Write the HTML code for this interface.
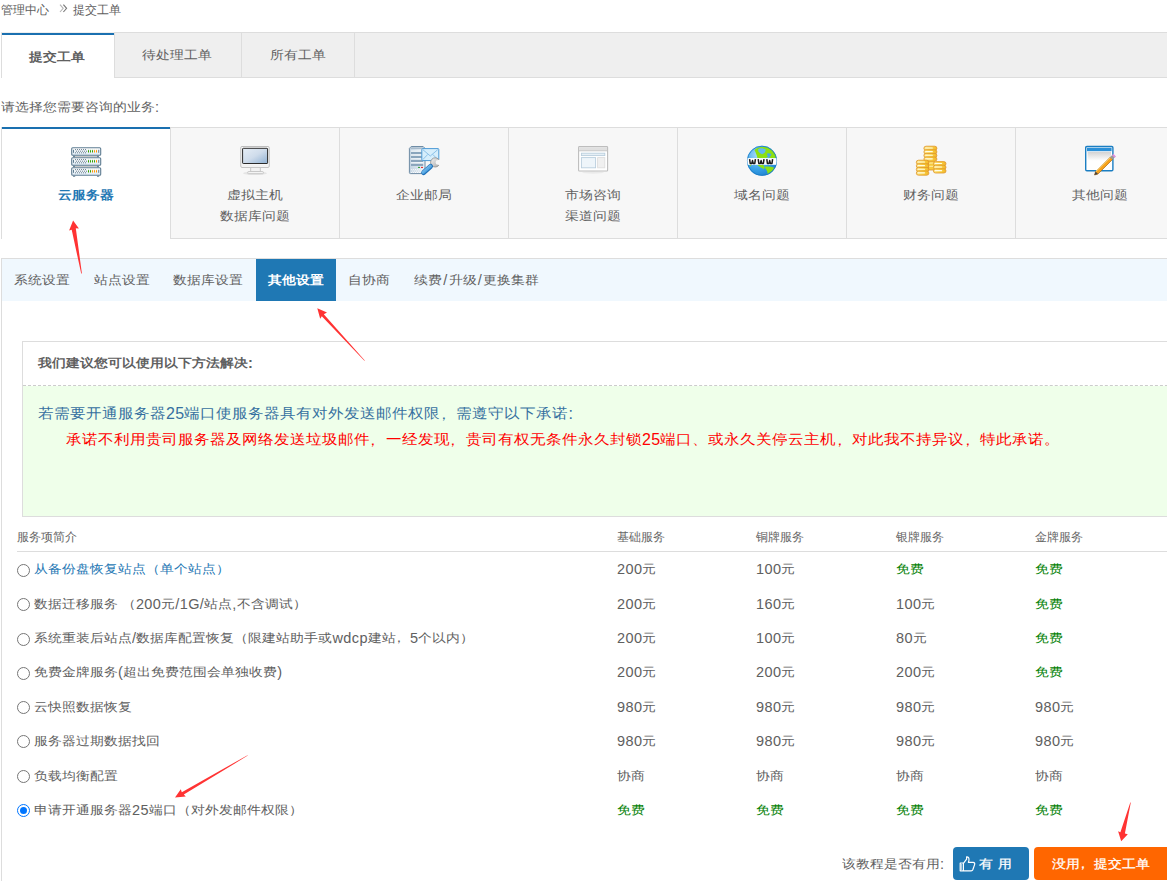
<!DOCTYPE html><html><head><meta charset="utf-8"><style>
*{box-sizing:border-box}
html,body{margin:0;padding:0}
body{width:1167px;height:881px;overflow:hidden;position:relative;background:#fff;font-family:"Liberation Sans",sans-serif;color:#555}
.a{position:absolute;white-space:nowrap}
.f12{font-size:12px;line-height:12px}
.f14{font-size:14px;line-height:14px;transform:scaleY(.87)}
.f16{font-size:16px;line-height:16px;transform:scaleY(.9)}
.b{font-weight:bold}
.f14 .l{letter-spacing:0.4px;font-size:14.5px;display:inline-block;transform:scaleY(1.15)}
.f16 .l{letter-spacing:0.3px;font-size:16px;display:inline-block;transform:scaleY(1.11)}
.f12 .l{letter-spacing:0.4px}
.sl .l{letter-spacing:0.4px;padding:0 1px 0 1.2px}
.cm{display:inline-block;width:1em;text-indent:-0.3em;overflow:hidden;vertical-align:top}
.pl{display:inline-block;width:1em;text-indent:0.3em;overflow:hidden;vertical-align:top}
</style></head><body>

<div class="a f12" style="left:1px;top:4px;color:#606060;">管理中心</div>
<svg class="a" style="left:59px;top:4px" width="9" height="9" viewBox="0 0 9 9"><path d="M1 0.6 L4.2 4.3 L1 8" fill="none" stroke="#b5b5b5" stroke-width="1.1"/><path d="M4.4 0.6 L7.6 4.3 L4.4 8" fill="none" stroke="#777" stroke-width="1.1"/></svg>
<div class="a f12" style="left:73px;top:4px;color:#606060;">提交工单</div>
<div class="a" style="left:1px;top:32px;width:1180px;height:46px;background:#efefef;border-top:1px solid #ddd;border-bottom:1px solid #ddd"></div>
<div class="a" style="left:1px;top:32px;width:113px;height:46px;background:#fff;border-left:1px solid #ddd;border-top:1px solid #eee"></div>
<div class="a" style="left:2px;top:33px;width:112px;height:2px;background:#1a70b0;"></div>
<div class="a" style="left:114px;top:33px;width:1px;height:45px;background:#ddd;"></div>
<div class="a" style="left:241px;top:33px;width:1px;height:44px;background:#ddd;"></div>
<div class="a" style="left:354px;top:33px;width:1px;height:44px;background:#ddd;"></div>
<div class="a f14 b" style="left:29px;top:50px;color:#606060;">提交工单</div>
<div class="a f14" style="left:142px;top:48px;color:#606060;">待处理工单</div>
<div class="a f14" style="left:270px;top:48px;color:#606060;">所有工单</div>
<div class="a f14" style="left:1px;top:100px;color:#606060;">请选择您需要咨询的业务<span class="l">:</span></div>
<div class="a" style="left:1px;top:127px;width:169px;height:112px;background:#fff;border-left:1px solid #ddd;border-top:1px solid #ddd"></div>
<svg class="a" style="left:70px;top:145px" width="32" height="32" viewBox="0 0 32 32"><defs><linearGradient id="sg" x1="0" y1="0" x2="0" y2="1"><stop offset="0" stop-color="#ffffff"/><stop offset="1" stop-color="#dce9f3"/></linearGradient></defs><rect x="3" y="10.60" width="26" height="1.6" fill="#c9c9c9"/><rect x="3" y="10.60" width="2" height="1.6" fill="#6f8799"/><rect x="27" y="10.60" width="2" height="1.6" fill="#6f8799"/><rect x="1.7" y="2.70" width="29" height="7.6" rx="1" fill="url(#sg)" stroke="#5f7d92" stroke-width="1.1"/><rect x="3" y="4.80" width="1" height="3" fill="#5f7d92"/><rect x="28.2" y="4.80" width="1" height="3" fill="#5f7d92"/><rect x="5" y="4.10" width="1" height="1" fill="#6b7f8e"/><rect x="7" y="4.10" width="1" height="1" fill="#6b7f8e"/><rect x="9" y="4.10" width="1" height="1" fill="#6b7f8e"/><rect x="11" y="4.10" width="1" height="1" fill="#6b7f8e"/><rect x="13" y="4.10" width="1" height="1" fill="#6b7f8e"/><rect x="15" y="4.10" width="1" height="1" fill="#6b7f8e"/><rect x="6" y="5.70" width="1" height="1" fill="#6b7f8e"/><rect x="8" y="5.70" width="1" height="1" fill="#6b7f8e"/><rect x="10" y="5.70" width="1" height="1" fill="#6b7f8e"/><rect x="12" y="5.70" width="1" height="1" fill="#6b7f8e"/><rect x="14" y="5.70" width="1" height="1" fill="#6b7f8e"/><rect x="16" y="5.70" width="1" height="1" fill="#6b7f8e"/><rect x="5" y="7.30" width="1" height="1" fill="#6b7f8e"/><rect x="7" y="7.30" width="1" height="1" fill="#6b7f8e"/><rect x="9" y="7.30" width="1" height="1" fill="#6b7f8e"/><rect x="11" y="7.30" width="1" height="1" fill="#6b7f8e"/><rect x="13" y="7.30" width="1" height="1" fill="#6b7f8e"/><rect x="15" y="7.30" width="1" height="1" fill="#6b7f8e"/><rect x="18" y="4.80" width="1" height="2.8" rx="0.4" fill="#3aa000"/><rect x="20" y="4.80" width="1" height="2.8" rx="0.4" fill="#3aa000"/><rect x="22" y="4.80" width="1" height="2.8" rx="0.4" fill="#3aa000"/><rect x="24" y="4.80" width="1" height="2.8" rx="0.4" fill="#ff9900"/><rect x="26" y="4.80" width="1" height="2.8" rx="0.4" fill="#ff9900"/><rect x="3" y="20.60" width="26" height="1.6" fill="#c9c9c9"/><rect x="3" y="20.60" width="2" height="1.6" fill="#6f8799"/><rect x="27" y="20.60" width="2" height="1.6" fill="#6f8799"/><rect x="1.7" y="12.70" width="29" height="7.6" rx="1" fill="url(#sg)" stroke="#5f7d92" stroke-width="1.1"/><rect x="3" y="14.80" width="1" height="3" fill="#5f7d92"/><rect x="28.2" y="14.80" width="1" height="3" fill="#5f7d92"/><rect x="5" y="14.10" width="1" height="1" fill="#6b7f8e"/><rect x="7" y="14.10" width="1" height="1" fill="#6b7f8e"/><rect x="9" y="14.10" width="1" height="1" fill="#6b7f8e"/><rect x="11" y="14.10" width="1" height="1" fill="#6b7f8e"/><rect x="13" y="14.10" width="1" height="1" fill="#6b7f8e"/><rect x="15" y="14.10" width="1" height="1" fill="#6b7f8e"/><rect x="6" y="15.70" width="1" height="1" fill="#6b7f8e"/><rect x="8" y="15.70" width="1" height="1" fill="#6b7f8e"/><rect x="10" y="15.70" width="1" height="1" fill="#6b7f8e"/><rect x="12" y="15.70" width="1" height="1" fill="#6b7f8e"/><rect x="14" y="15.70" width="1" height="1" fill="#6b7f8e"/><rect x="16" y="15.70" width="1" height="1" fill="#6b7f8e"/><rect x="5" y="17.30" width="1" height="1" fill="#6b7f8e"/><rect x="7" y="17.30" width="1" height="1" fill="#6b7f8e"/><rect x="9" y="17.30" width="1" height="1" fill="#6b7f8e"/><rect x="11" y="17.30" width="1" height="1" fill="#6b7f8e"/><rect x="13" y="17.30" width="1" height="1" fill="#6b7f8e"/><rect x="15" y="17.30" width="1" height="1" fill="#6b7f8e"/><rect x="18" y="14.80" width="1" height="2.8" rx="0.4" fill="#3aa000"/><rect x="20" y="14.80" width="1" height="2.8" rx="0.4" fill="#3aa000"/><rect x="22" y="14.80" width="1" height="2.8" rx="0.4" fill="#3aa000"/><rect x="24" y="14.80" width="1" height="2.8" rx="0.4" fill="#3aa000"/><rect x="26" y="14.80" width="1" height="2.8" rx="0.4" fill="#ff9900"/><rect x="1.7" y="22.70" width="29" height="7.6" rx="1" fill="url(#sg)" stroke="#5f7d92" stroke-width="1.1"/><rect x="3" y="24.80" width="1" height="3" fill="#5f7d92"/><rect x="28.2" y="24.80" width="1" height="3" fill="#5f7d92"/><rect x="5" y="24.10" width="1" height="1" fill="#6b7f8e"/><rect x="7" y="24.10" width="1" height="1" fill="#6b7f8e"/><rect x="9" y="24.10" width="1" height="1" fill="#6b7f8e"/><rect x="11" y="24.10" width="1" height="1" fill="#6b7f8e"/><rect x="13" y="24.10" width="1" height="1" fill="#6b7f8e"/><rect x="15" y="24.10" width="1" height="1" fill="#6b7f8e"/><rect x="6" y="25.70" width="1" height="1" fill="#6b7f8e"/><rect x="8" y="25.70" width="1" height="1" fill="#6b7f8e"/><rect x="10" y="25.70" width="1" height="1" fill="#6b7f8e"/><rect x="12" y="25.70" width="1" height="1" fill="#6b7f8e"/><rect x="14" y="25.70" width="1" height="1" fill="#6b7f8e"/><rect x="16" y="25.70" width="1" height="1" fill="#6b7f8e"/><rect x="5" y="27.30" width="1" height="1" fill="#6b7f8e"/><rect x="7" y="27.30" width="1" height="1" fill="#6b7f8e"/><rect x="9" y="27.30" width="1" height="1" fill="#6b7f8e"/><rect x="11" y="27.30" width="1" height="1" fill="#6b7f8e"/><rect x="13" y="27.30" width="1" height="1" fill="#6b7f8e"/><rect x="15" y="27.30" width="1" height="1" fill="#6b7f8e"/><rect x="18" y="24.80" width="1" height="2.8" rx="0.4" fill="#3aa000"/><rect x="20" y="24.80" width="1" height="2.8" rx="0.4" fill="#3aa000"/><rect x="22" y="24.80" width="1" height="2.8" rx="0.4" fill="#ff9900"/><rect x="24" y="24.80" width="1" height="2.8" rx="0.4" fill="#ff9900"/><rect x="26" y="24.80" width="1" height="2.8" rx="0.4" fill="#ff9900"/><rect x="3" y="30.6" width="2.2" height="1.2" fill="#6f8799"/><rect x="27" y="30.6" width="2.2" height="1.2" fill="#6f8799"/></svg>
<div class="a f14 b" style="left:1px;top:188px;color:#1f78b4;width:169px;text-align:center">云服务器</div>
<div class="a" style="left:170px;top:127px;width:169px;height:112px;background:#f7f7f7;border-left:1px solid #ddd;border-top:1px solid #ddd;border-bottom:1px solid #ddd"></div>
<svg class="a" style="left:239px;top:145px" width="32" height="32" viewBox="0 0 32 32"><defs><linearGradient id="mg" x1="0" y1="0" x2="1" y2="1"><stop offset="0" stop-color="#e6eef6"/><stop offset="0.5" stop-color="#cfdceb"/><stop offset="1" stop-color="#8fb0d2"/></linearGradient></defs><ellipse cx="16" cy="28.3" rx="12" ry="1.8" fill="#000" opacity="0.07"/><rect x="1.8" y="1.5" width="28.4" height="20.9" rx="1.2" fill="#fbfbfb" stroke="#bdbdbd" stroke-width="1"/><rect x="3.6" y="3.3" width="25" height="15.2" rx="0.6" fill="url(#mg)" stroke="#2b2b2b" stroke-width="1"/><line x1="3" y1="20.2" x2="29" y2="20.2" stroke="#e4e4e4" stroke-width="0.6"/><rect x="11.7" y="22.4" width="9.6" height="4.2" fill="#f2f2f2" stroke="#c2c2c2" stroke-width="0.9"/><rect x="8.8" y="26.6" width="15.5" height="2.1" rx="0.5" fill="#fafafa" stroke="#c2c2c2" stroke-width="0.9"/></svg>
<div class="a f14" style="left:170px;top:188px;color:#606060;width:169px;text-align:center">虚拟主机</div>
<div class="a f14" style="left:170px;top:209px;color:#606060;width:169px;text-align:center">数据库问题</div>
<div class="a" style="left:339px;top:127px;width:169px;height:112px;background:#f7f7f7;border-left:1px solid #ddd;border-top:1px solid #ddd;border-bottom:1px solid #ddd"></div>
<svg class="a" style="left:408px;top:145px" width="32" height="32" viewBox="0 0 32 32"><defs><linearGradient id="tg" x1="0" y1="0" x2="1" y2="0"><stop offset="0" stop-color="#c3d4e2"/><stop offset="1" stop-color="#e9f0f6"/></linearGradient><linearGradient id="hg" x1="0" y1="0" x2="1" y2="1"><stop offset="0" stop-color="#9ad6fa"/><stop offset="1" stop-color="#2584d0"/></linearGradient><linearGradient id="wg" x1="0" y1="0" x2="1" y2="1"><stop offset="0" stop-color="#f4f4f4"/><stop offset="1" stop-color="#a8a8a8"/></linearGradient></defs><path d="M3.2 1.5 H15.2 L17 3.4 V27.6 Q17 28.6 16 28.6 H2.4 Q1.4 28.6 1.4 27.6 V3.4 Z" fill="url(#tg)" stroke="#6f8ca5" stroke-width="1"/><rect x="2.6" y="2.4" width="13.4" height="1.6" fill="#a9bccc"/><rect x="3" y="5.60" width="12.2" height="1.1" fill="#ffffff"/><rect x="3" y="6.90" width="12.2" height="2.2" fill="#8aa5bc"/><rect x="3" y="9.55" width="12.2" height="1.1" fill="#ffffff"/><rect x="3" y="10.85" width="12.2" height="2.2" fill="#8aa5bc"/><rect x="3" y="13.50" width="12.2" height="1.1" fill="#ffffff"/><rect x="3" y="14.80" width="12.2" height="2.2" fill="#8aa5bc"/><rect x="3" y="17.45" width="12.2" height="1.1" fill="#ffffff"/><rect x="3" y="18.75" width="12.2" height="2.2" fill="#8aa5bc"/><rect x="10" y="21.9" width="2" height="1" fill="#2a9a2a"/><rect x="13" y="21.9" width="2" height="1" fill="#e02020"/><rect x="3.20" y="24.20" width="1" height="0.9" fill="#fff"/><rect x="5.10" y="24.20" width="1" height="0.9" fill="#fff"/><rect x="7.00" y="24.20" width="1" height="0.9" fill="#fff"/><rect x="8.90" y="24.20" width="1" height="0.9" fill="#fff"/><rect x="10.80" y="24.20" width="1" height="0.9" fill="#fff"/><rect x="12.70" y="24.20" width="1" height="0.9" fill="#fff"/><rect x="4.20" y="25.60" width="1" height="0.9" fill="#fff"/><rect x="6.10" y="25.60" width="1" height="0.9" fill="#fff"/><rect x="8.00" y="25.60" width="1" height="0.9" fill="#fff"/><rect x="9.90" y="25.60" width="1" height="0.9" fill="#fff"/><rect x="11.80" y="25.60" width="1" height="0.9" fill="#fff"/><rect x="13.70" y="25.60" width="1" height="0.9" fill="#fff"/><rect x="3.20" y="27.00" width="1" height="0.9" fill="#fff"/><rect x="5.10" y="27.00" width="1" height="0.9" fill="#fff"/><rect x="7.00" y="27.00" width="1" height="0.9" fill="#fff"/><rect x="8.90" y="27.00" width="1" height="0.9" fill="#fff"/><rect x="10.80" y="27.00" width="1" height="0.9" fill="#fff"/><rect x="12.70" y="27.00" width="1" height="0.9" fill="#fff"/><rect x="13.8" y="3.6" width="17" height="12" rx="0.8" fill="#d6eefc" stroke="#4d9ad6" stroke-width="1"/><path d="M14.8 4.6 L22.3 11 L29.8 4.6 M14.8 14.6 L19.8 9.4 M29.8 14.6 L24.8 9.4" fill="none" stroke="#6caee0" stroke-width="0.7"/><circle cx="27.2" cy="17.4" r="4.6" fill="url(#wg)" stroke="#8c8c8c" stroke-width="0.8"/><path d="M28.2 15.6 L32 14.6 L32 20.2 L28.2 19.2 Q27 17.4 28.2 15.6 Z" fill="#f7f7f7"/><path d="M15.6 27.6 L22.6 21.4" stroke="#1f70b8" stroke-width="4.8" stroke-linecap="round"/><path d="M15.4 27.4 L22.4 21.2" stroke="url(#hg)" stroke-width="3.2" stroke-linecap="round"/></svg>
<div class="a f14" style="left:339px;top:188px;color:#606060;width:169px;text-align:center">企业邮局</div>
<div class="a" style="left:508px;top:127px;width:169px;height:112px;background:#f7f7f7;border-left:1px solid #ddd;border-top:1px solid #ddd;border-bottom:1px solid #ddd"></div>
<svg class="a" style="left:577px;top:145px" width="32" height="32" viewBox="0 0 32 32"><ellipse cx="16" cy="27.5" rx="11" ry="1.2" fill="#000" opacity="0.05"/><rect x="1.6" y="1.6" width="29" height="24.4" rx="0.8" fill="#fff" stroke="#bdbdbd" stroke-width="1.1"/><rect x="2.2" y="2.2" width="27.8" height="3.6" fill="#e0e0e0"/><line x1="1.6" y1="5.8" x2="30.6" y2="5.8" stroke="#c4c4c4" stroke-width="0.9"/><rect x="4.4" y="8.2" width="23.4" height="2.4" fill="#e6eff6" stroke="#b9cedd" stroke-width="0.9"/><rect x="4.4" y="12.6" width="14.2" height="10.2" fill="#eef5fa" stroke="#b9cedd" stroke-width="0.9"/><rect x="20.6" y="12.6" width="7.2" height="10.2" fill="#f0f0f0" stroke="#dedede" stroke-width="0.9"/></svg>
<div class="a f14" style="left:508px;top:188px;color:#606060;width:169px;text-align:center">市场咨询</div>
<div class="a f14" style="left:508px;top:209px;color:#606060;width:169px;text-align:center">渠道问题</div>
<div class="a" style="left:677px;top:127px;width:169px;height:112px;background:#f7f7f7;border-left:1px solid #ddd;border-top:1px solid #ddd;border-bottom:1px solid #ddd"></div>
<svg class="a" style="left:746px;top:145px" width="32" height="32" viewBox="0 0 32 32"><defs><radialGradient id="gg" cx="0.35" cy="0.3" r="0.85"><stop offset="0" stop-color="#a8dcfb"/><stop offset="0.55" stop-color="#3aa2e8"/><stop offset="1" stop-color="#1477c6"/></radialGradient><clipPath id="gc"><circle cx="16" cy="15.8" r="14.6"/></clipPath></defs><circle cx="16" cy="15.8" r="15" fill="url(#gg)"/><g clip-path="url(#gc)" fill="#8ce012"><path d="M8.5 5 C11 2.4 16 1.4 20 2 C24 2.6 28 5.5 30 9 L30.5 13.2 L24 13.2 L22.5 11 L21 12.5 L19 13.2 L11.5 13.2 C11 11 10 8 8.5 5 Z"/><path d="M11 19.8 L17 19.8 C18.5 21 18.8 22.8 18 24.2 C16 23.2 13 21.5 11 19.8 Z"/><path d="M18.5 22 C21 21.2 25 21.6 28.5 22.8 C28.8 25.5 27 28.5 23.5 30 L21.5 29 C22 26.5 20 24.5 18.5 22 Z"/><path d="M3 19.8 L5.5 19.8 L4.5 21.2 Z"/></g><path d="M12 4.2 C14 3 17 3.2 19.5 4.2 C20 6.5 18.5 8.8 16 9.2 C14 8.6 12.2 7 12 4.2 Z" fill="#62b8f0"/><path d="M21.5 8 L25.5 9 L24 12 L21 11 Z" fill="#4aa8ea"/><circle cx="16" cy="15.8" r="14.6" fill="none" stroke="#1a7ac4" stroke-width="0.8"/><rect x="1" y="13.1" width="30" height="6.7" fill="#fff" clip-path="url(#gc)"/><g fill="none" stroke="#1b1b1b" stroke-width="1.5" stroke-linejoin="round"><path d="M3.6 14.2 L4.2 18.4 L5.8 18.4 L6.5 15.6 L7.2 18.4 L8.8 18.4 L9.4 14.2"/><path d="M12.2 14.2 L12.8 18.4 L14.4 18.4 L15.1 15.6 L15.8 18.4 L17.4 18.4 L18 14.2"/><path d="M20.8 14.2 L21.4 18.4 L23 18.4 L23.7 15.6 L24.4 18.4 L26 18.4 L26.6 14.2"/></g></svg>
<div class="a f14" style="left:677px;top:188px;color:#606060;width:169px;text-align:center">域名问题</div>
<div class="a" style="left:846px;top:127px;width:169px;height:112px;background:#f7f7f7;border-left:1px solid #ddd;border-top:1px solid #ddd;border-bottom:1px solid #ddd"></div>
<svg class="a" style="left:915px;top:145px" width="32" height="32" viewBox="0 0 32 32"><defs><linearGradient id="cg" x1="0" y1="0" x2="1" y2="0"><stop offset="0" stop-color="#fde27a"/><stop offset="0.6" stop-color="#f8cf3e"/><stop offset="1" stop-color="#f2b52a"/></linearGradient></defs><rect x="13.4" y="15" width="6" height="10" fill="#f7c93c" stroke="#e0952a" stroke-width="0.8"/><rect x="14" y="17.6" width="4.6" height="0.9" fill="#fff4b8"/><rect x="14" y="20.8" width="4.6" height="0.9" fill="#fff4b8"/><rect x="8.9" y="1.20" width="13" height="4.20" rx="2.2" fill="url(#cg)" stroke="#e0952a" stroke-width="0.8"/><rect x="10.10" y="2.50" width="7.80" height="1.1" rx="0.55" fill="#fffbe6"/><rect x="8.9" y="4.80" width="13" height="4.20" rx="2.2" fill="url(#cg)" stroke="#e0952a" stroke-width="0.8"/><rect x="10.10" y="6.10" width="7.80" height="1.1" rx="0.55" fill="#fffbe6"/><rect x="8.9" y="8.40" width="13" height="4.20" rx="2.2" fill="url(#cg)" stroke="#e0952a" stroke-width="0.8"/><rect x="10.10" y="9.70" width="7.80" height="1.1" rx="0.55" fill="#fffbe6"/><rect x="8.9" y="12.00" width="13" height="4.20" rx="2.2" fill="url(#cg)" stroke="#e0952a" stroke-width="0.8"/><rect x="10.10" y="13.30" width="7.80" height="1.1" rx="0.55" fill="#fffbe6"/><rect x="1.3" y="15.20" width="12.6" height="4.20" rx="2.2" fill="url(#cg)" stroke="#e0952a" stroke-width="0.8"/><rect x="2.50" y="16.50" width="7.56" height="1.1" rx="0.55" fill="#fffbe6"/><rect x="1.3" y="18.80" width="12.6" height="4.20" rx="2.2" fill="url(#cg)" stroke="#e0952a" stroke-width="0.8"/><rect x="2.50" y="20.10" width="7.56" height="1.1" rx="0.55" fill="#fffbe6"/><rect x="1.3" y="22.40" width="12.6" height="4.20" rx="2.2" fill="url(#cg)" stroke="#e0952a" stroke-width="0.8"/><rect x="2.50" y="23.70" width="7.56" height="1.1" rx="0.55" fill="#fffbe6"/><rect x="1.3" y="26.00" width="12.6" height="4.20" rx="2.2" fill="url(#cg)" stroke="#e0952a" stroke-width="0.8"/><rect x="2.50" y="27.30" width="7.56" height="1.1" rx="0.55" fill="#fffbe6"/><rect x="18.4" y="16.60" width="12.6" height="4.20" rx="2.2" fill="url(#cg)" stroke="#e0952a" stroke-width="0.8"/><rect x="19.60" y="17.90" width="7.56" height="1.1" rx="0.55" fill="#fffbe6"/><rect x="18.4" y="20.20" width="12.6" height="4.20" rx="2.2" fill="url(#cg)" stroke="#e0952a" stroke-width="0.8"/><rect x="19.60" y="21.50" width="7.56" height="1.1" rx="0.55" fill="#fffbe6"/><rect x="18.4" y="23.80" width="12.6" height="4.20" rx="2.2" fill="url(#cg)" stroke="#e0952a" stroke-width="0.8"/><rect x="19.60" y="25.10" width="7.56" height="1.1" rx="0.55" fill="#fffbe6"/></svg>
<div class="a f14" style="left:846px;top:188px;color:#606060;width:169px;text-align:center">财务问题</div>
<div class="a" style="left:1015px;top:127px;width:169px;height:112px;background:#f7f7f7;border-left:1px solid #ddd;border-top:1px solid #ddd;border-bottom:1px solid #ddd"></div>
<svg class="a" style="left:1084px;top:145px" width="32" height="32" viewBox="0 0 32 32"><defs><linearGradient id="eg" x1="0" y1="0" x2="0" y2="1"><stop offset="0" stop-color="#d2d2d2"/><stop offset="1" stop-color="#ffffff"/></linearGradient></defs><rect x="1.7" y="1.5" width="27.2" height="24.2" rx="1.2" fill="#fff" stroke="#1b7ec2" stroke-width="1.4"/><rect x="3" y="2.8" width="24.6" height="3.4" fill="#2a90d8"/><rect x="3.6" y="6.8" width="23.4" height="9" fill="url(#eg)"/><path d="M10.5 30 L11.6 26.6 L26.2 12 L28.6 14.4 L14 29 Z" fill="#f7a21a" stroke="#9a5a10" stroke-width="0.6"/><path d="M11.8 26.6 L26.4 12.2" stroke="#fde7a0" stroke-width="1"/><path d="M26 12.2 L28.4 9.8 L30.9 12.3 L28.6 14.6 Z" fill="#9a9a9a"/><path d="M28 10.2 L29.4 8.8 L32 11.4 L30.6 12.8 Z" fill="#dc90dc"/><path d="M10.5 30 L11.6 26.6 L14 29 Z" fill="#444"/></svg>
<div class="a f14" style="left:1015px;top:188px;color:#606060;width:169px;text-align:center">其他问题</div>
<div class="a" style="left:2px;top:127px;width:168px;height:2px;background:#1a70b0;"></div>
<div class="a" style="left:1px;top:258px;width:1180px;height:640px;background:transparent;border-left:1px solid #ddd;border-top:1px solid #ddd"></div>
<div class="a" style="left:2px;top:259px;width:1180px;height:42px;background:#f0f8fe;"></div>
<div class="a" style="left:256px;top:259px;width:80px;height:42px;background:#1f78b4;"></div>
<div class="a f14" style="left:14px;top:273px;color:#606060;">系统设置</div>
<div class="a f14" style="left:94px;top:273px;color:#606060;">站点设置</div>
<div class="a f14" style="left:173px;top:273px;color:#606060;">数据库设置</div>
<div class="a f14 b" style="left:267.5px;top:273px;color:#fff;">其他设置</div>
<div class="a f14" style="left:348px;top:273px;color:#606060;">自协商</div>
<div class="a f14 sl" style="left:414px;top:273px;color:#606060;">续费<span class="l">/</span>升级<span class="l">/</span>更换集群</div>
<div class="a" style="left:22px;top:341px;width:1180px;height:176px;background:#efffea;border:1px solid #ddd"></div>
<div class="a" style="left:23px;top:342px;width:1180px;height:44px;background:#fff;border-bottom:1px dashed #ccc"></div>
<div class="a f14 b" style="left:38px;top:356px;color:#606060;">我们建议您可以使用以下方法解决<span class="l">:</span></div>
<div class="a f16" style="left:38px;top:406px;color:#3670a0;">若需要开通服务器<span class="l">25</span>端口使服务器具有对外发送邮件权限<span class="cm">，</span>需遵守以下承诺<span class="l">:</span></div>
<div class="a f16" style="left:66px;top:432px;color:#ff0000;">承诺不利用贵司服务器及网络发送垃圾邮件<span class="cm">，</span>一经发现<span class="cm">，</span>贵司有权无条件永久封锁<span class="l">25</span>端口、或永久关停云主机<span class="cm">，</span>对此我不持异议<span class="cm">，</span>特此承诺。</div>
<div class="a f12" style="left:17px;top:531px;color:#666;">服务项简介</div>
<div class="a f12" style="left:617px;top:531px;color:#666;">基础服务</div>
<div class="a f12" style="left:756px;top:531px;color:#666;">铜牌服务</div>
<div class="a f12" style="left:896px;top:531px;color:#666;">银牌服务</div>
<div class="a f12" style="left:1035px;top:531px;color:#666;">金牌服务</div>
<div class="a" style="left:17px;top:551px;width:1170px;height:1px;background:#ddd;"></div>
<svg class="a" style="left:17px;top:564.00px" width="13" height="13" viewBox="0 0 13 13"><circle cx="6.5" cy="6.5" r="6" fill="#fff" stroke="#767676" stroke-width="1"/></svg>
<div class="a f14" style="left:34px;top:562.2px;color:#1f78b4;">从备份盘恢复站点（单个站点）</div>
<div class="a f14" style="left:617px;top:562.2px;color:#606060;"><span class="l">200</span>元</div>
<div class="a f14" style="left:756px;top:562.2px;color:#606060;"><span class="l">100</span>元</div>
<div class="a f14" style="left:896px;top:562.2px;color:#008000;">免费</div>
<div class="a f14" style="left:1035px;top:562.2px;color:#008000;">免费</div>
<svg class="a" style="left:17px;top:598.29px" width="13" height="13" viewBox="0 0 13 13"><circle cx="6.5" cy="6.5" r="6" fill="#fff" stroke="#767676" stroke-width="1"/></svg>
<div class="a f14" style="left:34px;top:596.63px;color:#606060;">数据迁移服务 （<span class="l">200</span>元<span class="l">/1G/</span>站点<span class="l">,</span>不含调试）</div>
<div class="a f14" style="left:617px;top:596.63px;color:#606060;"><span class="l">200</span>元</div>
<div class="a f14" style="left:756px;top:596.63px;color:#606060;"><span class="l">160</span>元</div>
<div class="a f14" style="left:896px;top:596.63px;color:#606060;"><span class="l">100</span>元</div>
<div class="a f14" style="left:1035px;top:596.63px;color:#008000;">免费</div>
<svg class="a" style="left:17px;top:632.58px" width="13" height="13" viewBox="0 0 13 13"><circle cx="6.5" cy="6.5" r="6" fill="#fff" stroke="#767676" stroke-width="1"/></svg>
<div class="a f14" style="left:34px;top:631.06px;color:#606060;">系统重装后站点<span class="l">/</span>数据库配置恢复（限建站助手或<span class="l">wdcp</span>建站<span class="cm">，</span><span class="l">5</span>个以内）</div>
<div class="a f14" style="left:617px;top:631.06px;color:#606060;"><span class="l">200</span>元</div>
<div class="a f14" style="left:756px;top:631.06px;color:#606060;"><span class="l">100</span>元</div>
<div class="a f14" style="left:896px;top:631.06px;color:#606060;"><span class="l">80</span>元</div>
<div class="a f14" style="left:1035px;top:631.06px;color:#008000;">免费</div>
<svg class="a" style="left:17px;top:666.87px" width="13" height="13" viewBox="0 0 13 13"><circle cx="6.5" cy="6.5" r="6" fill="#fff" stroke="#767676" stroke-width="1"/></svg>
<div class="a f14" style="left:34px;top:665.49px;color:#606060;">免费金牌服务<span class="l">(</span>超出免费范围会单独收费<span class="l">)</span></div>
<div class="a f14" style="left:617px;top:665.49px;color:#606060;"><span class="l">200</span>元</div>
<div class="a f14" style="left:756px;top:665.49px;color:#606060;"><span class="l">200</span>元</div>
<div class="a f14" style="left:896px;top:665.49px;color:#606060;"><span class="l">200</span>元</div>
<div class="a f14" style="left:1035px;top:665.49px;color:#008000;">免费</div>
<svg class="a" style="left:17px;top:701.16px" width="13" height="13" viewBox="0 0 13 13"><circle cx="6.5" cy="6.5" r="6" fill="#fff" stroke="#767676" stroke-width="1"/></svg>
<div class="a f14" style="left:34px;top:699.92px;color:#606060;">云快照数据恢复</div>
<div class="a f14" style="left:617px;top:699.92px;color:#606060;"><span class="l">980</span>元</div>
<div class="a f14" style="left:756px;top:699.92px;color:#606060;"><span class="l">980</span>元</div>
<div class="a f14" style="left:896px;top:699.92px;color:#606060;"><span class="l">980</span>元</div>
<div class="a f14" style="left:1035px;top:699.92px;color:#606060;"><span class="l">980</span>元</div>
<svg class="a" style="left:17px;top:735.45px" width="13" height="13" viewBox="0 0 13 13"><circle cx="6.5" cy="6.5" r="6" fill="#fff" stroke="#767676" stroke-width="1"/></svg>
<div class="a f14" style="left:34px;top:734.35px;color:#606060;">服务器过期数据找回</div>
<div class="a f14" style="left:617px;top:734.35px;color:#606060;"><span class="l">980</span>元</div>
<div class="a f14" style="left:756px;top:734.35px;color:#606060;"><span class="l">980</span>元</div>
<div class="a f14" style="left:896px;top:734.35px;color:#606060;"><span class="l">980</span>元</div>
<div class="a f14" style="left:1035px;top:734.35px;color:#606060;"><span class="l">980</span>元</div>
<svg class="a" style="left:17px;top:769.74px" width="13" height="13" viewBox="0 0 13 13"><circle cx="6.5" cy="6.5" r="6" fill="#fff" stroke="#767676" stroke-width="1"/></svg>
<div class="a f14" style="left:34px;top:768.78px;color:#606060;">负载均衡配置</div>
<div class="a f14" style="left:617px;top:768.78px;color:#606060;">协商</div>
<div class="a f14" style="left:756px;top:768.78px;color:#606060;">协商</div>
<div class="a f14" style="left:896px;top:768.78px;color:#606060;">协商</div>
<div class="a f14" style="left:1035px;top:768.78px;color:#606060;">协商</div>
<svg class="a" style="left:17px;top:804.03px" width="13" height="13" viewBox="0 0 13 13"><circle cx="6.5" cy="6.5" r="6" fill="#fff" stroke="#0075ff" stroke-width="1"/><circle cx="6.5" cy="6.5" r="3.5" fill="#0075ff"/></svg>
<div class="a f14" style="left:34px;top:803.21px;color:#606060;">申请开通服务器<span class="l">25</span>端口（对外发邮件权限）</div>
<div class="a f14" style="left:617px;top:803.21px;color:#008000;">免费</div>
<div class="a f14" style="left:756px;top:803.21px;color:#008000;">免费</div>
<div class="a f14" style="left:896px;top:803.21px;color:#008000;">免费</div>
<div class="a f14" style="left:1035px;top:803.21px;color:#008000;">免费</div>
<div class="a f14" style="left:842px;top:857px;color:#606060;">该教程是否有用<span class="l">:</span></div>
<div class="a" style="left:953px;top:847px;width:76px;height:33px;background:#1f78b4;border-radius:4px"></div>
<svg class="a" style="left:959px;top:856px" width="17" height="16" viewBox="0 0 17 16"><path d="M1.2 7 H4.4 V14.8 H1.2 Z M4.4 7.4 L7.6 3.2 V0.9 C9.2 0.7 10.4 2 9.9 4.4 L9.4 6.4 H14.2 C15.6 6.4 16 7.6 15.6 8.6 L13.8 13.8 C13.5 14.6 13 14.8 12.2 14.8 H4.4" fill="none" stroke="#fff" stroke-width="1.2" stroke-linejoin="round"/><path d="M2.6 8 V14" stroke="#fff" stroke-width="0.7"/></svg>
<div class="a f14" style="left:979px;top:857px;color:#fff;letter-spacing:4.5px;-webkit-text-stroke:0.3px #fff">有用</div>
<div class="a" style="left:1034px;top:847px;width:150px;height:33px;background:#ff6600;border-radius:4px"></div>
<div class="a f14" style="left:1052px;top:857px;color:#fff;-webkit-text-stroke:0.3px #fff">没用<span class="cm">，</span>提交工单</div>
<svg class="a" style="left:0;top:0" width="1167" height="881" viewBox="0 0 1167 881">
<path d="M73.1,220.4 L78.9,228.6 L75.8,228.3 L81.9,273.5 L81.2,273.6 L71.7,229.8 L69.1,230.4 Z" fill="#ff3333"/>
<path d="M317.3,308.2 L327,312.5 L323.8,314.2 L364.8,360.4 L364.4,360.8 L321.8,316.2 L320.2,318.8 Z" fill="#ff3333"/>
<path d="M175,797.4 L180.8,789.3 L181.8,792.2 L247.5,755.2 L247.8,755.6 L183.8,794.6 L185.8,796.6 Z" fill="#ff3333"/>
<path d="M1121.2,841.2 L1118.1,831.2 L1120.4,832.2 L1130.3,802.5 L1130.8,802.6 L1124.9,833.6 L1127.8,834.3 Z" fill="#ff3333"/>
</svg>
</body></html>
